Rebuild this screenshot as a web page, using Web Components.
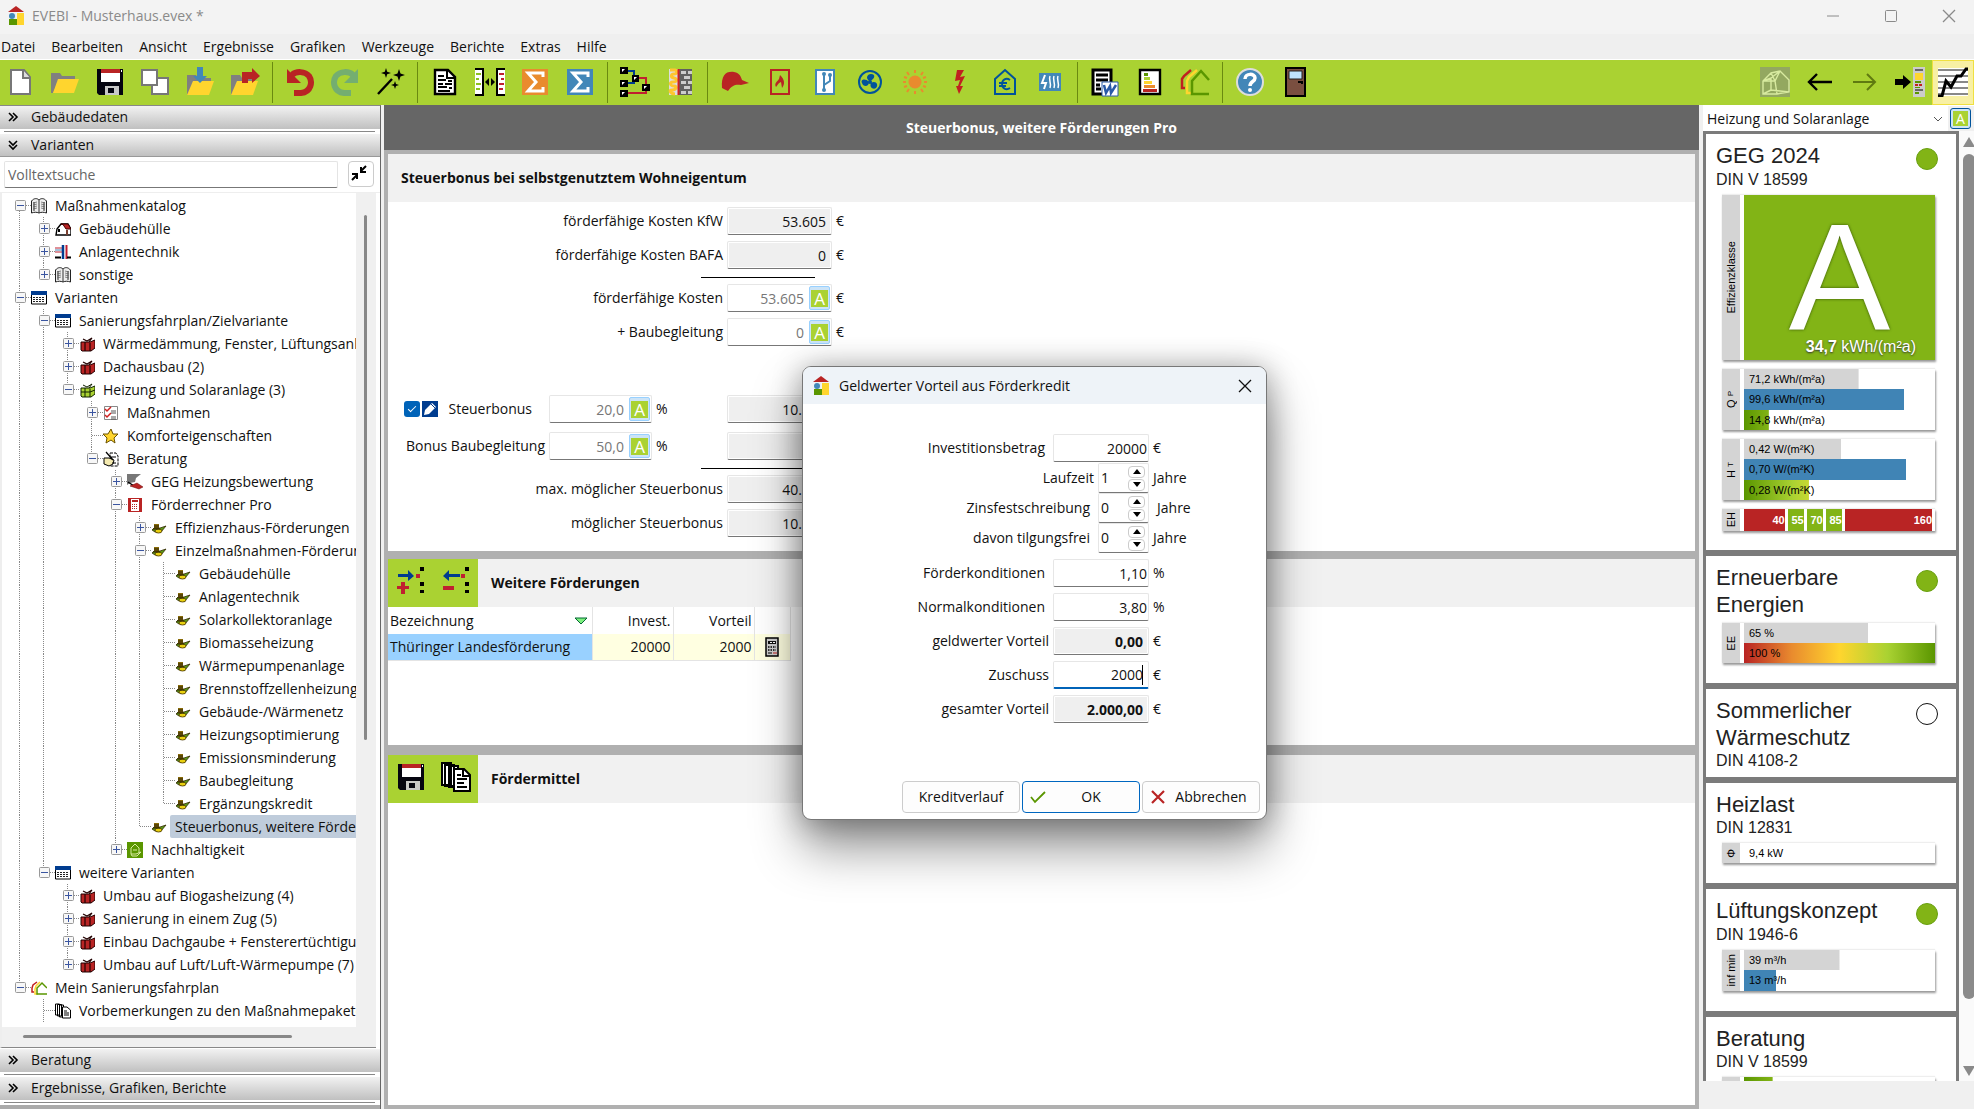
<!DOCTYPE html>
<html lang="de">
<head>
<meta charset="utf-8">
<title>EVEBI - Musterhaus.evex *</title>
<style>
    html, body { height: 100%; }
    body {
        margin: 0;
        overflow: hidden;
        font: 14px/20px "Open Sans", "Noto Sans", sans-serif;
        color: #111;
        background: #f0f0f0;
    }
</style>
</head>
<body>
<evebi-app></evebi-app>
<script>
(function () {
    const ICONS = {
        logo: `<path d="M0 6 8 0l8 6z" fill="#b92424"/><path d="M9 7h7v12H9z" fill="#ffd52e"/><path d="M2 7h6v6H2z" fill="#e8eef2"/><circle cx="4" cy="10" r="3" fill="#4287b8"/><path d="M1 13h8v6H1z" fill="#5a9600"/>`,
        file: `<path d="M6 3h13l6 7v17H6z" fill="#fff" stroke="#777" stroke-width="2"/><path d="M18 3v8h7" fill="#ddd" stroke="#777" stroke-width="2"/>`,
        open: `<path d="M1 6h9l2 3h13v8H7L3 26H1z" fill="#808080"/><path d="M8 12h21l-5 14H3z" fill="#ffd52e"/>`,
        save: `<path d="M2 2h26v26H4l-2-2z" fill="#050510"/><path d="M6 2h19v13H6z" fill="#fff"/><path d="M6 2h19v4H6z" fill="#b92424"/><path d="M10 19h14v9H10z" fill="#c8c8c8"/><path d="M13 21h6v5h-6z" fill="#050510"/><path d="M26 3h1v2h-1z" fill="#fff"/>`,
        copy: `<g fill="#fff" stroke="#777" stroke-width="2"><path d="M12 11h16v16H12z"/><path d="M2 3h15v15H2z"/></g>`,
        load: `<path d="M2 8h9l2 3h13v8H8L4 28H2z" fill="#808080"/><path d="M8 14h21l-5 14H2z" fill="#ffd52e"/><path d="M12 0h6v9h4l-7 7-7-7h4z" fill="#4287b8"/>`,
        unload: `<path d="M1 8h9l2 3h13v8H7L3 28H1z" fill="#808080"/><path d="M7 14h21l-5 14H1z" fill="#ffd52e"/><path d="M12 16V5h10V1l8 8-8 7v-4h-4v4z" fill="#b92424"/>`,
        undo: `<path d="M7 8c4-4 13-4 17 1 4 6 2 16-8 17H9" fill="none" stroke="#b92424" stroke-width="6"/><path d="M2 2v14h14z" fill="#b92424"/>`,
        redo: `<path d="M23 8c-4-4-13-4-17 1-4 6-2 16 8 17h7" fill="none" stroke="#74ae70" stroke-width="6"/><path d="M28 2v14H14z" fill="#74ae70"/>`,
        wand: `<path d="m3 27 14-15" stroke="#000" stroke-width="2.4"/><path d="m11 1 1.200 3.800L16 6l-3.800 1.200L11 11l-1.200-3.800L6 6l3.800-1.200zm13 1 1.500 4.500L30 8l-4.500 1.500L24 14l-1.500-4.500L18 8l4.500-1.500zm-4 12 1 3 3 1-3 1-1 3-1-3-3-1 3-1z"/>`,
        doc: `<path d="M5 3h13l7 7v17H5z" fill="#fff" stroke="#000" stroke-width="2.4"/><path d="M17 3v8h8" fill="none" stroke="#000" stroke-width="2"/><path d="M8 9h6M8 13h8m2 1h4M8 17h5m2 0h7M8 20h9m2 1h3M8 24h12" stroke="#000" stroke-width="2"/>`,
        compare: `<path d="M0 3h7v24H0zM23 3h7v24h-7z" fill="#fff"/><path d="M1 7h5m-5 5h3m-3 5h5m-5 5h4" stroke="#8cc020" stroke-width="2"/><path d="M24 7h5m-3 5h3m-5 5h5m-5 5h4" stroke="#c02030" stroke-width="2"/><path d="M0 2h8v26H0M30 2h-8v26h8" fill="none" stroke="#000" stroke-width="2"/><path d="m10 15 4-4v8zm10 0-4-4v8z"/>`,
        sigmaOrange: `<path d="M2 2h26v26H2z" fill="#e98b2e"/><path d="M23 10V6H8l8 9-8 9h15v-4" fill="none" stroke="#fff" stroke-width="3"/>`,
        sigmaBlue: `<path d="M2 2h26v26H2z" fill="#4287b8"/><path d="M23 10V6H8l8 9-8 9h15v-4" fill="none" stroke="#fff" stroke-width="3"/>`,
        nodes: `<path d="M8 4h6v6M8 16h6v-5" fill="none" stroke="#003c8f" stroke-width="2"/><path d="M16 11h10v10M8 26h18v-3" fill="none" stroke="#c02030" stroke-width="2"/><path d="M0 0h8v7H0zm0 13h8v7H0zm0 10h8v7H0zM12 8h7v7h-7zm10 9h8v7h-8z"/><path d="M2 2h3L2 5zm0 13h3l-3 3zm0 10h3l-3 3zm12-15h3l-3 3zm10 9h3l-3 3z" fill="#fff"/>`,
        wall: `<path d="M4 2h23v26H4z" fill="#ddd"/><path d="M14 2h13v26H14z" fill="#606060"/><path d="M16 4h5v3h-5zm7 0h4v3h-4zm-4 5h6v3h-6zm-3 5h5v3h-5zm7 0h4v3h-4zm-4 5h6v3h-6zm-3 5h5v3h-5zm7 0h4v3h-4z" fill="#ccc"/><path d="M5 3h5c3 1 2 4-1 4s-4 3 0 4 3 4-1 4-3 4 1 4 2 4-2 4-1 4 3 4" fill="none" stroke="#ffc52e" stroke-width="3"/><path d="M13.500 2v26" stroke="#d02020" stroke-width="2"/>`,
        cap: `<path d="M2 21C1 8 6 4 14 5c6 1 7 5 8 8l7 3-8 2c-5-1-9 0-13 6z" fill="#b92424"/>`,
        flame: `<path d="M6 3h18v24H6z" fill="none" stroke="#b92424" stroke-width="2"/><path d="M11 20c-2-4 1-5 3-8l1-4c5 5 5 9 2 13l-1-6c-3 1-3 3-5 5z" fill="#b92424"/>`,
        usb: `<path d="M6 3h18v24H6z" fill="#fff" stroke="#4287b8" stroke-width="2"/><path d="M14 8v15M20 8v6l-6 4" fill="none" stroke="#4287b8" stroke-width="2"/><circle cx="14" cy="7" r="2" fill="#4287b8"/><circle cx="20" cy="8" r="2" fill="#4287b8"/><circle cx="14" cy="23" r="2" fill="#4287b8"/>`,
        fan: `<circle cx="15" cy="15" r="11" fill="none" stroke="#00539b" stroke-width="2"/><g fill="#00539b"><path d="M15 14c-5-2-3-7 1-7 5 0 4 5-1 7zm-1 1c0 5-6 5-7 1-2-4 4-5 7-1zm2 1c5-3 8 2 5 5-3 2-7-1-5-5z"/><circle cx="15" cy="15" r="2"/></g>`,
        sun: `<circle cx="15" cy="15" r="6.500" fill="#e98b2e"/><path d="M15 3v3m0 18v3M3 15h3m18 0h3M7 5l2 3m14-3-2 3M7 25l2-3m14 3-2-3M4 10l3 1m19-1-3 1M4 20l3-1m19 1-3-1" stroke="#e98b2e" stroke-width="2"/>`,
        bolt: `<path d="M12 3h7l-4 7 5-1-5 10h3l-4 8-3-8h2l2-6-5 1z" fill="#c02020"/>`,
        euroHouse: `<path d="M5 12 15 3l10 9v15H5z" fill="none" stroke="#00539b" stroke-width="2"/><path d="M20 13c-4-3-8 0-8 4s4 7 8 4M9 16h8m-8 3h7" fill="none" stroke="#00539b" stroke-width="1.800"/>`,
        heat: `<path d="M4 6h22v18H4z" fill="#4287b8"/><path d="M10 8 7 16h4l-2 6" fill="none" stroke="#fff" stroke-width="2"/><path d="M15 9c-2 4 2 7 0 12m4-12c-2 4 2 7 0 12m4-12c-2 4 2 7 0 12" fill="none" stroke="#fff" stroke-width="1.500"/>`,
        word: `<path d="M3 3h18v24H3z" fill="#fff" stroke="#000" stroke-width="3"/><path d="M6 8h12M6 13h12M6 18h4m-4 4h5" stroke="#000" stroke-width="3"/><path d="M12 15h16v14H12z" fill="#fff" stroke="#2a5aa8"/><path d="m14 18 2 8 4-7 1 7 5-8" fill="none" stroke="#2a5aa8" stroke-width="2.500"/>`,
        label: `<path d="M5 3h20v24H5z" fill="#fff" stroke="#000" stroke-width="2.400"/><path d="M9 6h4v3H9z" fill="#5a9600"/><path d="M9 10h6v3H9z" fill="#aad232"/><path d="M9 14h8v3H9z" fill="#ffd52e"/><path d="M9 18h11v3H9z" fill="#e98b2e"/><path d="M8 22h14v3H8z" fill="#b92424"/>`,
        houses: `<g fill="none" stroke-width="2.500"><path d="M11 3 4 9 2 12v9h3" stroke="#c02020"/><path d="M17 3 9 10l-2 4v12h5" stroke="#ffd52e"/><path d="m29 13-8-9-9 10v13h17" stroke="#5a9600"/></g>`,
        help: `<circle cx="15" cy="15" r="13" fill="#4287b8" stroke="#ddd" stroke-width="2"/><path d="M10 12c0-6 10-6 10-1 0 4-5 3-5 8" fill="none" stroke="#fff" stroke-width="3.500"/><circle cx="15" cy="23" r="2" fill="#fff"/>`,
        door: `<path d="M6 1h19v28H6z" fill="#7a4f40" stroke="#000" stroke-width="2"/><path d="M9 4h13v8H9z" fill="#bfe4ff" stroke="#222"/><path d="M18 15h4v2" fill="none" stroke="#000" stroke-width="2"/>`,
        wireHouse: `<path d="M0 0h30v30H0z" fill="#93a860"/><path d="M3 27V14l8-8 9-2 9 9v12l-12 2zM3 14h12l2 13M15 14l5-10m-9 2 4 8m-12 0 8-3 0 12m0-12 9-7m-9 19 18 2m-18-2-8 4" fill="none" stroke="#d8eaa0" stroke-width="1.400"/>`,
        back: `<path d="M27 15H4m8-8-8 8 8 8" fill="none" stroke="#000" stroke-width="2.400"/>`,
        forward: `<path d="M3 15h22m-8-8 8 8-8 8" fill="none" stroke="#5f7a10" stroke-width="2"/>`,
        toPanel: `<path d="M0 12h8V8l8 7-8 7v-4H0z"/><path d="M18 0h12v30H18z" fill="#ccc"/><path d="M20 2h8v2h-8zm0 20h8v2h-8z" fill="#666"/><path d="M20 6h8v7h-8z" fill="#ffd52e"/><path d="M20 14h6v2h-6zm0 6h5v1h-5zm0 5h4v2h-4z" fill="#5a9600"/><path d="M20 17h3v2h-3zm4 0h3v2h-3z" fill="#c02020"/>`,
        chart: `<path d="M0 1h30v28H0z" fill="#fff"/><path d="M0 3h30M0 9h30M0 15h30M0 21h30M0 27h30" stroke="#888" stroke-width="2"/><path d="M0 29h4l4-15 5 6 6-11h4l5-7h2" fill="none" stroke="#000" stroke-width="3"/>`,
        addRow: `<path d="M2 8h10V4l6 6-6 5v-4H2z" fill="#003c8f"/><path d="M5 16h4v4h4v3H9v5H5v-5H1v-3h4z" fill="#c02030"/><path d="M20 8h4v4h-4z" fill="#c02030"/><path d="M24 1h4v4h-4zm0 15h4v4h-4zm0 8h4v3h-4z"/>`,
        delRow: `<path d="M19 8H8V4l-6 6 6 5v-4h11z" fill="#003c8f"/><path d="M2 20h11v4H2z" fill="#c02030"/><path d="M20 8h4v4h-4z" fill="#c02030"/><path d="M24 1h4v4h-4zm0 15h4v4h-4zm0 8h4v3h-4z"/>`,
        docs: `<g fill="#fff" stroke="#000" stroke-width="2"><path d="M1 1h9v22H1zM4 3h9v21H4zM8 4h9v21H8z"/><path d="M13 7h10l6 6v16H13z"/></g><path d="M22 7v7h7" fill="none" stroke="#000" stroke-width="2"/><path d="M16 13h4m-4 4h10m-10 4h7m-7 4h10" stroke="#000" stroke-width="2"/>`,
        book: `<path d="M.500 3C3 0 6 0 8 2c2-2 5-2 7.500 1v12c-3-1-5-1-7.500 0-2.500-1-4.500-1-7.500 0z" fill="#eee" stroke="#222"/><path d="M8 2v13M3 4v9m10-9v9" stroke="#333"/><path d="M2 5l4-1M2 7l4-1M2 9l4-1M2 11l4-1M10 4l4 1m-4 1 4 1m-4 1 4 1m-4 1 4 1" stroke="#555" stroke-width=".7"/>`,
        home: `<path d="M2 8 6 3h7l3 5v6H1z" fill="#fff" stroke="#000" stroke-width="1.400"/><path d="M6 3h7l3 5h-5L8 3.500z" fill="#b92424" stroke="#400"/><path d="M3 8h2v3H3z"/><path d="M11 9h2v5h-2z" fill="#7a4030"/>`,
        pipes: `<path d="M0 4h8M0 8h8" stroke="#c02030"/><path d="M0 6h8" stroke="#4287b8"/><path d="M8 1v14" stroke="#003c8f" stroke-width="2.500"/><path d="M11.500 1v14" stroke="#c02030" stroke-width="2"/><path d="M0 13.500h6m6 0h4" stroke="#000" stroke-width="2"/>`,
        table: `<path d="M.500 2h15v12H.500z" fill="#fff" stroke="#000"/><path d="M0 1h16v4H0z" fill="#003c8f"/><path d="M2 7.500h12m-12 2h12m-12 2h12" stroke="#222" stroke-dasharray="2 1"/>`,
        redBox: `<path d="M2 6h9l5-2v8l-4 3H3l-1-1z" fill="#b92424" stroke="#200"/><path d="M6 6v9M11 7v8M4 3l4 2 5-3-3 4" fill="none" stroke="#200" stroke-width="1.200"/>`,
        greenBox: `<path d="M2 6h9l5-2v8l-4 3H3l-1-1z" fill="#aad232" stroke="#120"/><path d="M6 6v9M11 7v8M4 3l4 2 5-3-3 4M2 10h9l5-2" fill="none" stroke="#120" stroke-width="1"/>`,
        checks: `<path d="M1.500 1.500h13v13h-13z" fill="#fff" stroke="#888"/><path d="m2 4 2 2 4-4M2 10l2 2 4-4" fill="none" stroke="#d02020" stroke-width="1.500"/><path d="M8 6h5M8 8h5m-5 4h5m-5 2h5" stroke="#555"/>`,
        star: `<path d="m8 1 2 5h5l-4 4 1 5-4-3-5 3 1-5-4-4h5z" fill="#ffd52e" stroke="#6a5200"/>`,
        advise: `<path d="M7 2h6l2 3v10H7z" fill="#fff" stroke="#000" stroke-dasharray="3 1"/><path d="M1 7h5l5 2-1 4-4 2-5-2z" fill="#f4eab0" stroke="#000"/><path d="m3 1 7 8m-3-3h6m-4 6h4" stroke="#000" stroke-width="1.200"/>`,
        geg: `<path d="M0 0h14L9 4l-1 4-5 1-3 2z" fill="#777"/><path d="m1 8 6 4" stroke="#000" stroke-width="1.500"/><path d="m3 12 7-3 6 4-4 2z" fill="#b92424" stroke="#600" stroke-width=".5"/>`,
        calcRed: `<path d="M1 1h14v14H1z" fill="#b92424"/><path d="M4 2h8v12H4z" fill="#fff"/><path d="M5 3h6v2H5z" fill="#b92424"/><path d="M5 7.500h6m-6 2h6m-6 2h6" stroke="#b92424" stroke-dasharray="1 1"/>`,
        coins: `<path d="m1 10 2-2h6l6-2-5 6H4z" fill="#5a9a18" stroke="#342800" stroke-width=".8"/><path d="M3 4h5v5H3z" fill="#5a4606"/><path d="M3 4h5v1H3z" fill="#8a6c08"/><ellipse cx="7.500" cy="11" rx="3.500" ry="2" fill="#e8d010" stroke="#423000" stroke-width=".8"/><path d="M2 9h7" stroke="#342800"/>`,
        green: `<path d="M0 0h16v16H0z" fill="#5a9600"/><path d="M4 12V6l4-4 4 4v5m-8 1h5l5-2-4 4H5zM6 8h4" fill="none" stroke="#d8eaa0"/>`,
        plan: `<g fill="none" stroke-width="1.500"><path d="M6 2 2 5 1 8v4h2" stroke="#c02020"/><path d="M9 2 5 6 4 9v5h3" stroke="#ffd52e"/><path d="m16 8-5-5-5 5v6h10" stroke="#5a9600"/></g>`,
        pages: `<g fill="#fff" stroke="#000" stroke-width="1"><path d="M.500 1h4v11h-4zM2.500 1.500h4V13h-4zM4.500 2h4v12h-4z"/><path d="M7.500 4H12l3.500 3v8h-8z"/></g><path d="M9 8h3m-3 2h5m-5 2h5" stroke="#000"/>`,
        calc: `<path d="M2 1h12v18H2z" fill="#ccc" stroke="#000" stroke-width="1.500"/><path d="M4 4h8v3H4z" fill="#111"/><path d="M6 5h2v1H6zm3 0h2v1H9z" fill="#fff"/><path d="M4 10h8m-8 3h8" stroke="#000" stroke-width="1.500" stroke-dasharray="1.500 1"/><path d="M4 16h4" stroke="#000"/><path d="M9 16h4" stroke="#c02020"/>`,
        pencil: `<path d="M0 0h16v16H0z" fill="#003c8f"/><path d="m2 14 1-5 7-7 4 4-7 7z" fill="#fff"/><path d="m9 3 4 4" stroke="#003c8f"/>`,
        shrink: `<path d="M15 1 10 6m0-4v5h5M1 15l5-5m0 4V9H1" fill="none" stroke="#000" stroke-width="2"/>`,
        down: `<path d="m1 2 4 4 4-4M1 6l4 4 4-4" fill="none" stroke="#000" stroke-width="1.600"/>`,
        right: `<path d="m1 2 4 4-4 4M5 2l4 4-4 4" fill="none" stroke="#000" stroke-width="1.600"/>`,
        close: `<path d="m1 1 12 12M13 1 1 13" stroke="currentColor" stroke-width="1.300"/>`,
        min: `<path d="M1 7h12" stroke="currentColor"/>`,
        max: `<rect x="1.500" y="1.500" width="11" height="11" rx="1" fill="none" stroke="currentColor"/>`,
        ok: `<path d="m1 8 4 5L15 3" fill="none" stroke="#5a9600" stroke-width="1.800"/>`,
        cancel: `<path d="m2 2 12 12M14 2 2 14" stroke="#b92424" stroke-width="2.200"/>`,
        sort: `<path d="M1 2h12L7 8z" fill="#7df07d" stroke="#063"/>`
    };
    // drawing area of the icons that are not 30 by 30
    const BOXES = {
        logo: "16 20", calc: "16 20", shrink: "16 16", down: "12 12", right: "12 12",
        close: "14 14", min: "14 14", max: "14 14", sort: "14 10"
    };
    "book home pipes table redBox greenBox checks star advise geg calcRed coins green plan pages pencil ok cancel"
        .split(" ").forEach(n => BOXES[n] = "16 16");

    function icon(name) {
        return `<app-icon name="${name}"></app-icon>`;
    }

    class Base extends HTMLElement {
        connectedCallback() {
            if (this.shadowRoot) return;
            let template = document.createElement("template");
            template.innerHTML = `<style>
                *, *::before { box-sizing: border-box; }
                button, input, select { font: inherit; color: inherit; margin: 0; padding: 0; border: 0; background: none; }
                </style>` + this.render();
            this.attachShadow({ mode: "open" }).appendChild(template.content.cloneNode(true));
        }
        attr(name) {
            return this.getAttribute(name) || "";
        }
    }

    customElements.define("app-icon", class extends Base {
        render() {
            let name = this.attr("name");
            let [w, h] = (BOXES[name] || "30 30").split(" ");
            return `<style>:host { display: inline-flex; flex: none; } svg { display: block; }</style>
                <svg width="${w}" height="${h}" viewBox="0 0 ${w} ${h}" aria-hidden="true">${ICONS[name]}</svg>`;
        }
    });

    customElements.define("title-bar", class extends Base {
        render() {
            return `<style>
                :host { display: flex; align-items: center; height: 34px; padding: 0 0 2px 8px; gap: 8px; background: #f3f3f3; color: #8a8a8a; }
                span { flex: 1; }
                button { width: 58px; height: 30px; display: grid; place-items: center; }
                nav { display: flex; margin-right: -4px; }
                </style>
                ${icon("logo")}<span><slot></slot></span>
                <nav>
                    <button aria-label="Minimieren">${icon("min")}</button>
                    <button aria-label="Maximieren">${icon("max")}</button>
                    <button aria-label="Schließen">${icon("close")}</button>
                </nav>`;
        }
    });

    customElements.define("menu-bar", class extends Base {
        render() {
            let items = this.attr("items").split(",");
            return `<style>
                :host { display: flex; gap: 16px; height: 26px; align-items: center; padding-left: 1px; background: #efefef; border-bottom: 1px solid #fff; }
                </style>` + items.map(i => `<button>${i}</button>`).join("");
        }
    });

    customElements.define("tool-bar", class extends Base {
        render() {
            let groups = [
                ["file", "open", "save", "copy", "load", "unload"],
                ["undo", "redo", "wand"],
                ["doc", "compare", "sigmaOrange", "sigmaBlue"],
                ["nodes", "wall"],
                ["cap", "flame", "usb", "fan", "sun", "bolt", "euroHouse", "heat"],
                ["word", "label", "houses"],
                ["help", "door"]
            ];
            let btn = n => `<button aria-label="${n}" class="${n}">${icon(n)}</button>`;
            return `<style>
                :host { display: flex; height: 45px; background: #aad232; overflow: hidden; }
                .group { display: flex; }
                .group + .group::before { content: ""; width: 10px; background: linear-gradient(#6a8a10, #6a8a10) 5px 2px / 1px 41px no-repeat; }
                .group:first-of-type { margin-left: -3px; }
                .group.end { margin-left: auto; }
                .group.end::before { display: none; }
                button { width: 45px; display: grid; place-items: center; padding-bottom: 1px; }
                .chart { width: 42px; background: #f8f0a4; border: 1px solid #f0e040; }
                </style>` +
                groups.map(g => `<div class="group">${g.map(btn).join("")}</div>`).join("") +
                `<div class="group end">${["wireHouse", "back", "forward", "toPanel", "chart"].map(btn).join("")}</div>`;
        }
    });

    customElements.define("accordion-head", class extends Base {
        render() {
            return `<style>
                :host { display: block; }
                button { display: flex; align-items: center; gap: 11px; width: 100%; height: 23px; padding: 0 0 1px 8px; background: linear-gradient(#f2f2f2, #c0c0c0); }
                :host([open]) button { border-bottom: 1px solid #999; }
                </style>
                <button aria-expanded="${this.hasAttribute("open")}">${icon(this.hasAttribute("open") ? "down" : "right")}<slot></slot></button>`;
        }
    });

    // level, icon, expander (+, - or blank), text
    const TREE = [
        [0, "book", "-", "Maßnahmenkatalog"],
        [1, "home", "+", "Gebäudehülle"],
        [1, "pipes", "+", "Anlagentechnik"],
        [1, "book", "+", "sonstige"],
        [0, "table", "-", "Varianten"],
        [1, "table", "-", "Sanierungsfahrplan/Zielvariante"],
        [2, "redBox", "+", "Wärmedämmung, Fenster, Lüftungsanlage (2)"],
        [2, "redBox", "+", "Dachausbau (2)"],
        [2, "greenBox", "-", "Heizung und Solaranlage (3)"],
        [3, "checks", "+", "Maßnahmen"],
        [3, "star", "", "Komforteigenschaften"],
        [3, "advise", "-", "Beratung"],
        [4, "geg", "+", "GEG Heizungsbewertung"],
        [4, "calcRed", "-", "Förderrechner Pro"],
        [5, "coins", "+", "Effizienzhaus-Förderungen"],
        [5, "coins", "-", "Einzelmaßnahmen-Förderungen"],
        [6, "coins", "", "Gebäudehülle"],
        [6, "coins", "", "Anlagentechnik"],
        [6, "coins", "", "Solarkollektoranlage"],
        [6, "coins", "", "Biomasseheizung"],
        [6, "coins", "", "Wärmepumpenanlage"],
        [6, "coins", "", "Brennstoffzellenheizung"],
        [6, "coins", "", "Gebäude-/Wärmenetz"],
        [6, "coins", "", "Heizungsoptimierung"],
        [6, "coins", "", "Emissionsminderung"],
        [6, "coins", "", "Baubegleitung"],
        [6, "coins", "", "Ergänzungskredit"],
        [5, "coins", "", "Steuerbonus, weitere Förderungen Pro", true],
        [4, "green", "+", "Nachhaltigkeit"],
        [1, "table", "-", "weitere Varianten"],
        [2, "redBox", "+", "Umbau auf Biogasheizung (4)"],
        [2, "redBox", "+", "Sanierung in einem Zug (5)"],
        [2, "redBox", "+", "Einbau Dachgaube + Fensterertüchtigung (6)"],
        [2, "redBox", "+", "Umbau auf Luft/Luft-Wärmepumpe (7)"],
        [0, "plan", "-", "Mein Sanierungsfahrplan"],
        [1, "pages", "", "Vorbemerkungen zu den Maßnahmepaketen"]
    ];

    customElements.define("nav-tree", class extends Base {
        more(index, level) {
            for (let i = index + 1; i < TREE.length; i++) {
                if (TREE[i][0] < level) return false;
                if (TREE[i][0] === level) return true;
            }
            // the list goes on below the visible part
            return level === 1;
        }
        row([level, pic, state, text, selected], index) {
            let cells = "";
            for (let l = 0; l <= level; l++) {
                let own = l === level;
                let on = this.more(index, l);
                let d = "";
                if (own) d = `M12.500 ${index ? 0 : 11}V${on ? 23 : 11}M13 11.500h11`;
                else if (on) d = "M12.500 0v23";
                cells += `<svg width="24" height="23"><path d="${d}" fill="none" stroke="#888" stroke-dasharray="1 1"/>`;
                if (own && state) {
                    cells += `<rect x="8.500" y="6.500" width="10" height="10" rx="1" fill="#f7f7f7" stroke="#999"/>
                        <path d="M10 11.500h7${state === "+" ? "M13.500 8v7" : ""}" stroke="#3a55a0"/>`;
                }
                cells += "</svg>";
            }
            return `<li role="treeitem" aria-level="${level + 1}">${cells}${icon(pic)}<span class="${selected ? "on" : ""}">${text}</span></li>`;
        }
        render() {
            return `<style>
                :host { display: grid; grid-template: minmax(0, 1fr) 20px / minmax(0, 1fr) 20px; flex: 1; min-height: 0; margin-right: 4px; border-left: 2px solid #eee; border-bottom: 1px solid #888; background: #f0f0f0; }
                ul { margin: 0; padding: 1px 0 0 5px; list-style: none; overflow: hidden; background: #fff; }
                li { display: flex; align-items: center; height: 23px; white-space: nowrap; }
                svg { flex: none; }
                span { margin-left: 3px; padding: 0 5px; line-height: 23px; }
                .on { background: #bfccdb; border-radius: 2px; }
                .v { width: 3px; height: 63%; margin: 22px 0 0 8px; background: #888; border-radius: 2px; }
                .h { height: 3px; width: 76%; margin: 8px 0 0 21px; background: #888; border-radius: 2px; }
                </style>
                <ul role="tree">${TREE.map((r, i) => this.row(r, i)).join("")}</ul>
                <div class="v"></div><div class="h"></div>`;
        }
    });

    customElements.define("side-bar", class extends Base {
        render() {
            return `<style>
                :host { display: flex; flex-direction: column; width: 381px; flex: none; border-right: 1px solid #666; border-top: 1px solid #888; background: #fff; }
                hr { width: calc(100% - 9px); margin: 2px 4px; border: 0; border-top: 1px solid #888; }
                .search { display: flex; gap: 10px; padding: 4px 6px 4px 4px; border-bottom: 1px solid #eee; }
                input { flex: 1; height: 27px; min-width: 0; padding: 0 3px; border: 1px solid #e4e4e4; border-bottom-color: #777; border-radius: 2px; }
                input::placeholder { color: #666; }
                .search button { width: 26px; height: 26px; padding: 0 4px 3px 0; border: 1px solid #ccc; border-radius: 4px; display: grid; place-items: center; }
                .foot { height: 4px; background: #aaa; }
                accordion-head.first { margin-top: 1px; }
                </style>
                <accordion-head>Gebäudedaten</accordion-head><hr>
                <accordion-head open>Varianten</accordion-head>
                <div class="search"><input type="text" placeholder="Volltextsuche" aria-label="Volltextsuche"><button aria-label="Alle schließen">${icon("shrink")}</button></div>
                <nav-tree></nav-tree>
                <accordion-head class="first">Beratung</accordion-head><hr>
                <accordion-head>Ergebnisse, Grafiken, Berichte</accordion-head><hr>
                <div class="foot"></div>`;
        }
    });

    // A value box with label and unit; "auto" adds the A switch
    customElements.define("value-field", class extends Base {
        render() {
            let ro = this.hasAttribute("readonly") ? "readonly" : "";
            let label = this.attr("label");
            return `<style>
                :host { display: flex; align-items: center; height: 28px; }
                label { flex: 1; text-align: right; padding-right: var(--label-gap, 4px); white-space: nowrap; }
                .box { display: flex; align-items: center; width: var(--box, 105px); height: 28px; flex: none; background: #fff; border: 1px solid #e6e6e6; border-bottom-color: #777; border-radius: 2px; }
                input { flex: 1; min-width: 0; height: 24px; padding: 0 5px 0 2px; text-align: right; outline: 0; }
                :host([readonly]) .box { background: #efefef; box-shadow: inset 0 0 0 1px #fff; }
                :host([auto]) input { color: #777; }
                :host([strong]) input { font-weight: bold; }
                :host([flush]) input { padding-right: 1px; }
                :host([active]) .box { border-bottom: 2px solid #0063b8; }
                :host([active]) input { background: linear-gradient(#000, #000) right 5px center / 1px 20px no-repeat; }
                .a { width: 21px; height: 24px; margin-right: 1px; display: grid; place-items: center; background: #cce4f7; border: 1px solid #99d1ff; border-radius: 2px; }
                .a b { width: 17px; height: 17px; background: #aad232; color: #fff; font: 17px/17px "Open Sans", sans-serif; text-align: center; }
                .unit { width: var(--unit, 24px); padding-left: 4px; }
                </style>
                ${label ? `<label for="v">${label}</label>` : ""}
                <div class="box"><input id="v" type="text" value="${this.attr("value")}" ${label ? "" : 'aria-label="Betrag"'} ${ro}>
                ${this.hasAttribute("auto") ? '<button class="a" aria-label="Automatik"><b>A</b></button>' : ""}</div>
                <span class="unit">${this.attr("unit")}</span>`;
        }
    });

    customElements.define("year-field", class extends Base {
        render() {
            return `<style>
                :host { display: flex; align-items: center; height: 30px; }
                label { flex: 1; text-align: right; padding-right: var(--label-gap, 4px); }
                .box { display: flex; align-items: center; width: 51px; height: 30px; padding-right: 3px; border: 1px solid #e6e6e6; border-bottom-color: #777; border-radius: 2px; }
                input { flex: 1; min-width: 0; padding-left: 2px; height: 24px; margin-bottom: 2px; appearance: textfield; }
                input::-webkit-inner-spin-button { display: none; }
                .spin { display: flex; flex-direction: column; gap: 1px; }
                button { width: 17px; height: 12px; border: 1px solid #ccc; border-radius: 4px; display: grid; place-items: center; }
                .unit { width: 117px; padding-left: var(--unit-gap, 4px); }
                </style>
                <label for="y">${this.attr("label")}</label>
                <div class="box"><input id="y" type="number" value="${this.attr("value")}">
                <div class="spin">
                    <button aria-label="mehr"><svg width="8" height="5"><path d="M0 5 4 0l4 5z"/></svg></button>
                    <button aria-label="weniger"><svg width="8" height="5"><path d="M0 0h8L4 5z"/></svg></button>
                </div></div>
                <span class="unit">Jahre</span>`;
        }
    });

    customElements.define("section-panel", class extends Base {
        render() {
            return `<style>
                :host { display: block; background: #fff; }
                header { display: flex; align-items: center; height: 48px; background: #f1f1f1; }
                h2 { margin: 0; padding-left: 13px; font: bold 14px/20px "Open Sans", "Noto Sans", sans-serif; }
                </style>
                <header><slot name="tools"></slot><h2>${this.attr("heading")}</h2></header>
                <slot></slot>`;
        }
    });

    customElements.define("main-view", class extends Base {
        render() {
            return `<style>
                :host { display: flex; flex-direction: column; flex: 1; min-width: 0; margin-left: 3px; background: #b0b0b0; }
                h1 { margin: 0; height: 45px; flex: none; background: #666; color: #fff; font: bold 14px/45px "Open Sans", "Noto Sans", sans-serif; text-align: center; }
                .panels { flex: 1; display: flex; flex-direction: column; padding: 4px; min-height: 0; }
                .panels > * > button { width: 45px; height: 48px; padding: 0 0 4px; background: #aad232; display: grid; place-items: center; }
                .tax { padding-bottom: 14px; }
                .grants { margin-top: 8px; height: 186px; }
                .funds { margin-top: 10px; flex: 1; }
                .form { display: flex; flex-direction: column; width: 468px; padding-top: 5px; gap: 6px; }
                .sum { width: 114px; height: 1px; margin: 2px 0 0 313px; background: #000; }
                .pair { display: flex; }
                .pair.first { margin: 43px 0 3px; }
                .left { display: flex; align-items: center; width: 339px; padding-left: 16px; }
                .left value-field { --box: 103px; --unit: 75px; flex: 1; }
                .tick { display: flex; gap: 2px; align-items: center; }
                .tick + value-field { --label-gap: 17px; }
                input[type=checkbox] { appearance: none; width: 16px; height: 16px; border-radius: 3px; background: #0063b8; display: grid; place-items: center; }
                input[type=checkbox]::before { content: ""; width: 8px; height: 4px; border: solid #fff; border-width: 0 0 1px 1px; transform: rotate(-45deg); margin-bottom: 3px; }
                table { border-collapse: collapse; table-layout: fixed; width: 403px; }
                th { height: 27px; font-weight: normal; text-align: right; padding: 0 2px; border-right: 1px solid #e4e4e4; }
                td { height: 26px; text-align: right; padding: 0 2px; background: #ffffe1; border-right: 1px solid #e4e4e4; border-bottom: 1px solid #e4e4e4; }
                th:first-child, td:first-child { text-align: left; }
                td:first-child { background: #99d1ff; }
                th div { display: flex; justify-content: space-between; align-items: center; padding-right: 2px; }
                td button { display: grid; width: 100%; place-items: center; }
                </style>
                <h1>Steuerbonus, weitere Förderungen Pro</h1>
                <div class="panels">
                    <section-panel class="tax" heading="Steuerbonus bei selbstgenutztem Wohneigentum">
                        <div class="form">
                            <value-field label="förderfähige Kosten KfW" value="53.605" unit="€" readonly></value-field>
                            <value-field label="förderfähige Kosten BAFA" value="0" unit="€" readonly></value-field>
                            <div class="sum"></div>
                            <value-field label="förderfähige Kosten" value="53.605" unit="€" auto></value-field>
                            <value-field label="+ Baubegleitung" value="0" unit="€" auto></value-field>
                            <div class="pair first">
                                <div class="left"><span class="tick"><input type="checkbox" checked aria-label="Steuerbonus">${icon("pencil")}</span>
                                <value-field label="Steuerbonus" value="20,0" unit="%" auto></value-field></div>
                                <value-field value="10.721" readonly></value-field>
                            </div>
                            <div class="pair">
                                <div class="left"><value-field label="Bonus Baubegleitung" value="50,0" unit="%" auto></value-field></div>
                                <value-field value="0" readonly></value-field>
                            </div>
                            <div class="sum"></div>
                            <value-field label="max. möglicher Steuerbonus" value="40.000" readonly></value-field>
                            <value-field label="möglicher Steuerbonus" value="10.721" readonly></value-field>
                        </div>
                    </section-panel>
                    <section-panel class="grants" heading="Weitere Förderungen">
                        <button slot="tools" aria-label="Zeile einfügen">${icon("addRow")}</button>
                        <button slot="tools" aria-label="Zeile löschen">${icon("delRow")}</button>
                        <table>
                            <colgroup><col style="width:204px"><col style="width:81px"><col style="width:81px"><col></colgroup>
                            <thead><tr><th><div>Bezeichnung${icon("sort")}</div></th><th>Invest.</th><th>Vorteil</th><th></th></tr></thead>
                            <tbody><tr><td>Thüringer Landesförderung</td><td>20000</td><td>2000</td><td><button aria-label="Rechner">${icon("calc")}</button></td></tr></tbody>
                        </table>
                    </section-panel>
                    <section-panel class="funds" heading="Fördermittel">
                        <button slot="tools" aria-label="Speichern">${icon("save")}</button>
                        <button slot="tools" aria-label="Dokumente">${icon("docs")}</button>
                    </section-panel>
                </div>`;
        }
    });

    customElements.define("result-card", class extends Base {
        render() {
            let state = this.attr("state");
            return `<style>
                :host { display: block; flex: none; padding: 8px 18px 20px 10px; background: #fff; color: #222; font-family: "Liberation Sans", Arial, sans-serif; }
                :host([plain]) { padding-bottom: 6px; }
                header { display: flex; justify-content: space-between; }
                h3 { margin: 0; font-size: 22px; line-height: 27px; font-weight: normal; }
                p { margin: 0; font-size: 16px; line-height: 20px; }
                i { width: 22px; height: 22px; margin-top: 6px; border-radius: 50%; background: #82b416; border: 1px solid #69a010; }
                i.open { background: #fff; border-color: #111; }
                </style>
                <header><h3>${this.attr("heading").replace("|", "<br>")}</h3>${state ? `<i class="${state}"></i>` : ""}</header>
                ${this.attr("norm") ? `<p>${this.attr("norm")}</p>` : ""}
                <slot></slot>`;
        }
    });

    customElements.define("result-gauge", class extends Base {
        render() {
            return `<style>
                :host { display: flex; gap: 4px; margin: 5px 3px 0 6px; color: #000; font-size: 11px; background: #fff; box-shadow: 1px 2px 2px #999, 0 -1px 1px #eee; }
                :host([next]) { margin-top: 9px; }
                .name { width: 18px; flex: none; display: grid; place-items: center; background: #d4d4d4; }
                .name span { writing-mode: vertical-rl; transform: rotate(180deg); line-height: 18px; }
                .name small { font-size: 8px; }
                .area { flex: 1; min-width: 0; }
                </style>
                <div class="name"><span>${this.attr("name").replace(/_(.)/, " <small>$1</small>")}</span></div>
                <div class="area"><slot></slot></div>`;
        }
    });

    customElements.define("gauge-bar", class extends Base {
        render() {
            let fills = {
                grey: "#d4d4d4, #d4d4d4",
                blue: "#4084b5, #4084b5",
                green: "90deg, #5a9600, #82b416",
                lime: "90deg, #5a9600, #aad232 75%, #c8d832",
                scale: "90deg, #b92424, #e98b2e 25%, #ffd52e 50%, #aad232 75%, #5a9600"
            };
            let fill = fills[this.attr("fill")];
            return `<style>
                :host { display: block; height: 20px; line-height: 20px; padding-left: 5px; white-space: nowrap;
                    ${fill ? `background: linear-gradient(${fill}) left / ${this.attr("part")}% 100% no-repeat;` : ""} }
                :host([fill=blue]) { height: 21px; line-height: 21px; }
                </style><slot></slot>`;
        }
    });

    customElements.define("result-panel", class extends Base {
        render() {
            return `<style>
                :host { display: flex; flex-direction: column; width: 271px; flex: none; margin-left: 4px; padding-top: 1px; background: #fff; }
                .top { display: flex; height: 25px; gap: 2px; background: #f0f0f0; }
                select { width: 245px; appearance: none; padding-left: 4px; background: #fff url("data:image/svg+xml,%3Csvg xmlns='http://www.w3.org/2000/svg' width='10' height='6'%3E%3Cpath d='m1 1 4 4 4-4' fill='none' stroke='%23555'/%3E%3C/svg%3E") right 5px center no-repeat; }
                .top button { width: 21px; height: 21px; margin-top: 2px; display: grid; place-items: center; background: #cce4f7; border: 1px solid #00539b; border-radius: 3px; }
                .top b { width: 15px; height: 15px; background: #aad232; color: #fff; font: 14px/15px "Open Sans", sans-serif; }
                .body { display: flex; flex: 1; min-height: 0; }
                .cards { flex: 1; min-width: 0; display: flex; flex-direction: column; gap: 6px; padding: 3px; background: #7b7b7b; overflow: hidden; }
                .cards result-card:first-child { padding-bottom: 19px; }
                .cards result-card:last-child { margin-bottom: -6px; }
                .scroll { width: 15px; display: flex; flex-direction: column; padding: 6px 0 5px 4px; gap: 7px; background: #fafafa; overflow: hidden; }
                .scroll svg { flex: none; }
                .thumb { width: 12px; flex: 0 1 90%; border-radius: 6px; background: #8a8a8a; }
                .scroll svg:last-child { margin-top: auto; }
                .gap { height: 28px; flex: none; background: #f0f0f0; }
                .grade { display: flex; flex-direction: column; align-items: center; height: 165px; background: #82b416; color: #fff; text-shadow: 0 1px 2px #333; }
                .grade strong { font-size: 152px; line-height: 140px; height: 142px; padding-top: 12px; font-weight: normal; text-shadow: 0 0 3px #2d4a00; }
                .grade span { align-self: flex-end; padding-right: 19px; font-size: 16px; line-height: 20px; }
                .eh { display: flex; gap: 3px; height: 22px; padding-right: 3px; font: bold 11px/22px "Liberation Sans", sans-serif; color: #fff; text-align: right; }
                .eh span { width: 16px; background: #82b416; }
                .eh .r { flex: 41; background: #b92424; }
                .eh .r:last-child { flex: 88; }
                </style>
                <div class="top"><select aria-label="Variante"><option>Heizung und Solaranlage</option></select><button aria-label="Automatik"><b>A</b></button></div>
                <div class="body">
                <div class="cards">
                    <result-card heading="GEG 2024" norm="DIN V 18599" state="good">
                        <result-gauge name="Effizienzklasse"><div class="grade"><strong>A</strong><span><b>34,7</b> kWh/(m²a)</span></div></result-gauge>
                        <result-gauge name="Q_P" next>
                            <gauge-bar fill="grey" part="60">71,2 kWh/(m²a)</gauge-bar>
                            <gauge-bar fill="blue" part="84">99,6 kWh/(m²a)</gauge-bar>
                            <gauge-bar fill="green" part="13">14,8 kWh/(m²a)</gauge-bar>
                        </result-gauge>
                        <result-gauge name="H_T" next>
                            <gauge-bar fill="grey" part="51">0,42 W/(m²K)</gauge-bar>
                            <gauge-bar fill="blue" part="85">0,70 W/(m²K)</gauge-bar>
                            <gauge-bar fill="lime" part="34">0,28 W/(m²K)</gauge-bar>
                        </result-gauge>
                        <result-gauge name="EH" next>
                            <div class="eh"><span class="r">40</span><span>55</span><span>70</span><span>85</span><span class="r">160</span></div>
                        </result-gauge>
                    </result-card>
                    <result-card heading="Erneuerbare|Energien" state="good">
                        <result-gauge name="EE">
                            <gauge-bar fill="grey" part="65">65 %</gauge-bar>
                            <gauge-bar fill="scale" part="100">100 %</gauge-bar>
                        </result-gauge>
                    </result-card>
                    <result-card heading="Sommerlicher|Wärmeschutz" norm="DIN 4108-2" state="open" plain></result-card>
                    <result-card heading="Heizlast" norm="DIN 12831">
                        <result-gauge name="Φ"><gauge-bar>9,4 kW</gauge-bar></result-gauge>
                    </result-card>
                    <result-card heading="Lüftungskonzept" norm="DIN 1946-6" state="good">
                        <result-gauge name="inf min">
                            <gauge-bar fill="grey" part="50">39 m³/h</gauge-bar>
                            <gauge-bar fill="blue" part="17">13 m³/h</gauge-bar>
                        </result-gauge>
                    </result-card>
                    <result-card heading="Beratung" norm="DIN V 18599">
                        <result-gauge name=""><gauge-bar fill="green" part="15"></gauge-bar></result-gauge>
                    </result-card>
                </div>
                <div class="scroll">
                    <svg width="12" height="10"><path d="M0 10 6 0l6 10z" fill="#8a8a8a"/></svg>
                    <div class="thumb"></div>
                    <svg width="12" height="10"><path d="M0 0h12L6 10z" fill="#8a8a8a"/></svg>
                </div>
                </div>
                <div class="gap"></div>`;
        }
    });

    customElements.define("credit-dialog", class extends Base {
        render() {
            return `<style>
                :host { position: absolute; top: 366px; left: 802px; width: 465px; border: 1px solid #777; border-radius: 9px; background: #fff; overflow: hidden;
                    box-shadow: 0 28px 50px rgba(0, 0, 0, .42), 0 2px 30px rgba(0, 0, 0, .32); }
                header { display: flex; align-items: center; gap: 10px; height: 37px; padding: 0 14px 0 10px; background: #eef3f8; }
                h2 { flex: 1; margin: 0; font: inherit; }
                header button { display: grid; place-items: center; }
                form { display: flex; flex-direction: column; padding: 30px 0 0; gap: 6px; --box: 96px; --unit: 117px; }
                .years { display: flex; flex-direction: column; margin-top: -5px; }
                .wide { --label-gap: 8px; }
                .far { --unit-gap: 8px; }
                footer { display: flex; justify-content: flex-end; gap: 2px; padding: 58px 6px 6px; }
                footer button { display: flex; align-items: center; width: 118px; height: 32px; padding: 0 7px; border: 1px solid #ccc; border-radius: 4px; background: #fdfdfd; }
                footer button + button { padding-right: 3px; }
                footer span { flex: 1; text-align: center; }
                footer .ok { border-color: #0067c0; }
                </style>
                <header>${icon("logo")}<h2>Geldwerter Vorteil aus Förderkredit</h2><button aria-label="Schließen">${icon("close")}</button></header>
                <form>
                    <value-field class="wide" label="Investitionsbetrag" value="20000" unit="€" flush></value-field>
                    <div class="years">
                        <year-field label="Laufzeit" value="1"></year-field>
                        <year-field class="wide far" label="Zinsfestschreibung" value="0"></year-field>
                        <year-field class="wide" label="davon tilgungsfrei" value="0"></year-field>
                    </div>
                    <value-field class="wide" label="Förderkonditionen" value="1,10" unit="%" flush></value-field>
                    <value-field class="wide" label="Normalkonditionen" value="3,80" unit="%" flush></value-field>
                    <value-field label="geldwerter Vorteil" value="0,00" unit="€" readonly strong></value-field>
                    <value-field label="Zuschuss" value="2000" unit="€" active></value-field>
                    <value-field label="gesamter Vorteil" value="2.000,00" unit="€" readonly strong></value-field>
                </form>
                <footer>
                    <button><span>Kreditverlauf</span></button>
                    <button class="ok">${icon("ok")}<span>OK</span></button>
                    <button>${icon("cancel")}<span>Abbrechen</span></button>
                </footer>`;
        }
    });

    customElements.define("evebi-app", class extends Base {
        render() {
            return `<style>
                :host { display: flex; flex-direction: column; height: 100%; }
                .work { display: flex; flex: 1; min-height: 0; }
                </style>
                <title-bar>EVEBI - Musterhaus.evex *</title-bar>
                <menu-bar items="Datei,Bearbeiten,Ansicht,Ergebnisse,Grafiken,Werkzeuge,Berichte,Extras,Hilfe"></menu-bar>
                <tool-bar></tool-bar>
                <div class="work"><side-bar></side-bar><main-view></main-view><result-panel></result-panel></div>
                <credit-dialog role="dialog"></credit-dialog>`;
        }
    });
})();
</script>
</body>
</html>
